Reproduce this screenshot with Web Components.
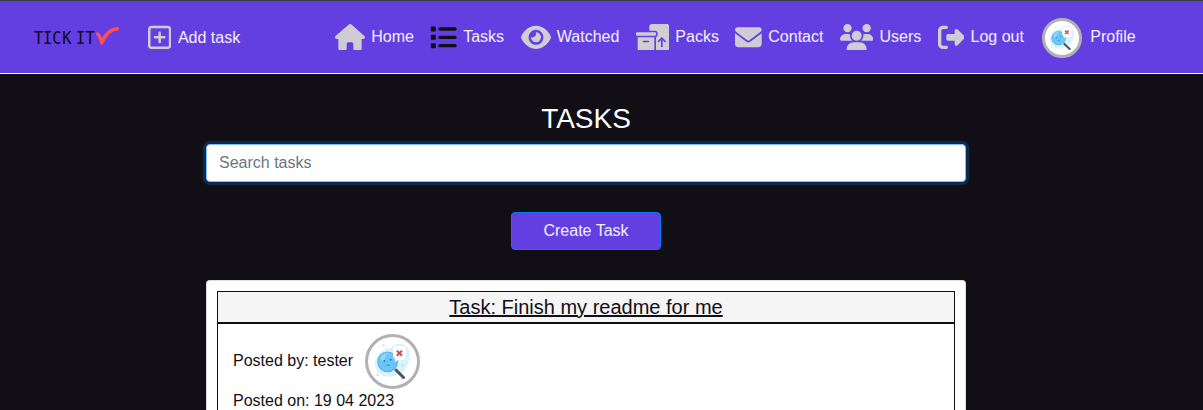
<!DOCTYPE html>
<html lang="en">
<head>
<meta charset="utf-8">
<title>Tick It</title>
<style>
html, body { margin: 0; height: 100%; }
body { background: #110e15; overflow: hidden; font: 16px/24px "Liberation Sans", Arial, sans-serif; color: #110e15; }
</style>
</head>
<body>
<tick-app></tick-app>
<script>
const ICONS = {
  plus: [448, 'M64 80c-8.8 0-16 7.2-16 16V416c0 8.8 7.2 16 16 16H384c8.8 0 16-7.2 16-16V96c0-8.8-7.2-16-16-16H64zM0 96C0 60.7 28.7 32 64 32H384c35.3 0 64 28.7 64 64V416c0 35.3-28.7 64-64 64H64c-35.3 0-64-28.7-64-64V96zM200 344V280H136c-13.3 0-24-10.7-24-24s10.7-24 24-24h64V168c0-13.3 10.7-24 24-24s24 10.7 24 24v64h64c13.3 0 24 10.7 24 24s-10.7 24-24 24H248v64c0 13.3-10.7 24-24 24s-24-10.7-24-24z'],
  house: [576, 'M575.8 255.5c0 18-15 32.1-32 32.1h-32l.7 160.2c0 2.7-.2 5.4-.5 8.1V472c0 22.1-17.9 40-40 40H456c-1.1 0-2.2 0-3.3-.1c-1.4 .1-2.8 .1-4.2 .1H416 392c-22.1 0-40-17.9-40-40V448 384c0-17.7-14.3-32-32-32H256c-17.7 0-32 14.3-32 32v64 24c0 22.1-17.9 40-40 40H160 128.1c-1.5 0-3-.1-4.5-.2c-1.2 .1-2.4 .2-3.6 .2H104c-22.1 0-40-17.9-40-40V360c0-.9 0-1.9 .1-2.8V287.6H32c-18 0-32-14-32-32.1c0-9 3-17 10-24L266.4 8c7-7 15-8 22-8s15 2 21 7L564.8 231.5c8 7 12 15 11 24z'],
  list: [512, 'M40 48C26.7 48 16 58.7 16 72v48c0 13.3 10.7 24 24 24H88c13.3 0 24-10.7 24-24V72c0-13.3-10.7-24-24-24H40zM192 64c-17.7 0-32 14.3-32 32s14.3 32 32 32H480c17.7 0 32-14.3 32-32s-14.3-32-32-32H192zm0 160c-17.7 0-32 14.3-32 32s14.3 32 32 32H480c17.7 0 32-14.3 32-32s-14.3-32-32-32H192zm0 160c-17.7 0-32 14.3-32 32s14.3 32 32 32H480c17.7 0 32-14.3 32-32s-14.3-32-32-32H192zM16 232v48c0 13.3 10.7 24 24 24H88c13.3 0 24-10.7 24-24V232c0-13.3-10.7-24-24-24H40c-13.3 0-24 10.7-24 24zM40 368c-13.3 0-24 10.7-24 24v48c0 13.3 10.7 24 24 24H88c13.3 0 24-10.7 24-24V392c0-13.3-10.7-24-24-24H40z'],
  eye: [576, 'M288 32c-80.8 0-145.5 36.8-192.6 80.6C48.6 156 17.3 208 2.5 243.7c-3.3 7.9-3.3 16.7 0 24.6C17.3 304 48.6 356 95.4 399.4C142.5 443.2 207.2 480 288 480s145.5-36.8 192.6-80.6c46.8-43.5 78.1-95.4 93-131.1c3.3-7.9 3.3-16.7 0-24.6c-14.9-35.7-46.2-87.7-93-131.1C433.5 68.8 368.8 32 288 32zM144 256a144 144 0 1 1 288 0 144 144 0 1 1 -288 0zm144-64c0 35.3-28.7 64-64 64c-7.1 0-13.9-1.2-20.3-3.3c-5.5-1.8-11.9 1.6-11.7 7.4c.3 6.9 1.3 13.8 3.2 20.7c13.7 51.2 66.4 81.6 117.6 67.9s81.6-66.4 67.9-117.6c-11.1-41.5-47.8-69.4-88.6-71.1c-5.8-.2-9.2 6.1-7.4 11.7c2.1 6.4 3.3 13.2 3.3 20.3z'],
  boxes: [640, 'M256 48c0-26.5 21.5-48 48-48H592c26.5 0 48 21.5 48 48V464c0 26.5-21.5 48-48 48H381.3c1.8-5 2.7-10.4 2.7-16V253.3c18.6-6.6 32-24.4 32-45.3V176c0-26.5-21.5-48-48-48H256V48zM571.3 347.3c6.2-6.2 6.2-16.4 0-22.6l-64-64c-6.2-6.2-16.4-6.2-22.6 0l-64 64c-6.2 6.2-6.2 16.4 0 22.6s16.4 6.2 22.6 0L480 310.6V432c0 8.8 7.2 16 16 16s16-7.2 16-16V310.6l36.7 36.7c6.2 6.2 16.4 6.2 22.6 0zM0 176c0-8.8 7.2-16 16-16H368c8.8 0 16 7.2 16 16v32c0 8.8-7.2 16-16 16H16c-8.8 0-16-7.2-16-16V176zm352 80V480c0 17.7-14.3 32-32 32H64c-17.7 0-32-14.3-32-32V256H352zM144 320c-8.8 0-16 7.2-16 16s7.2 16 16 16h96c8.8 0 16-7.2 16-16s-7.2-16-16-16H144z'],
  envelope: [512, 'M48 64C21.5 64 0 85.5 0 112c0 15.1 7.1 29.3 19.2 38.4L236.8 313.6c11.4 8.5 27 8.5 38.4 0L492.8 150.4c12.1-9.1 19.2-23.3 19.2-38.4c0-26.5-21.5-48-48-48H48zM0 176V384c0 35.3 28.7 64 64 64H448c35.3 0 64-28.7 64-64V176L294.4 339.2c-22.8 17.1-54 17.1-76.8 0L0 176z'],
  users: [640, 'M144 0a80 80 0 1 1 0 160A80 80 0 1 1 144 0zM512 0a80 80 0 1 1 0 160A80 80 0 1 1 512 0zM0 298.7C0 239.8 47.8 192 106.7 192h42.7c15.9 0 31 3.5 44.6 9.7c-1.3 7.2-1.9 14.7-1.9 22.3c0 38.2 16.8 72.5 43.3 96c-.2 0-.4 0-.7 0H21.3C9.6 320 0 310.4 0 298.7zM405.3 320c-.2 0-.4 0-.7 0c26.6-23.5 43.3-57.8 43.3-96c0-7.6-.7-15-1.9-22.3c13.6-6.3 28.7-9.7 44.6-9.7h42.7C592.2 192 640 239.8 640 298.7c0 11.8-9.6 21.3-21.3 21.3H405.3zM224 224a96 96 0 1 1 192 0 96 96 0 1 1 -192 0zM128 485.3C128 411.7 187.7 352 261.3 352H378.7C452.3 352 512 411.7 512 485.3c0 14.7-11.9 26.7-26.7 26.7H154.7c-14.7 0-26.7-11.9-26.7-26.7z'],
  exit: [512, 'M377.9 105.9L500.7 228.7c7.2 7.2 11.3 17.1 11.3 27.3s-4.1 20.1-11.3 27.3L377.9 406.1c-6.4 6.4-15 9.9-24 9.9c-18.7 0-33.9-15.2-33.9-33.9l0-62.1-128 0c-17.7 0-32-14.3-32-32l0-64c0-17.7 14.3-32 32-32l128 0 0-62.1c0-18.7 15.2-33.9 33.9-33.9c9 0 17.6 3.6 24 9.9zM160 96L96 96c-17.7 0-32 14.3-32 32l0 256c0 17.7 14.3 32 32 32l64 0c17.7 0 32 14.3 32 32s-14.3 32-32 32l-64 0c-53 0-96-43-96-96L0 128C0 75 43 32 96 32l64 0c17.7 0 32 14.3 32 32s-14.3 32-32 32z']
};

function define(name, markup) {
  customElements.define(name, class extends HTMLElement {
    constructor() {
      super();
      this.attachShadow({ mode: 'open' }).innerHTML = typeof markup === 'function' ? markup(this) : markup;
    }
  });
}

define('tick-avatar', `
<style>
:host { display: block; box-sizing: border-box; width: var(--size, 40px); height: var(--size, 40px); border: 3px solid #b1b1b1; border-radius: 50%; background: #fff; overflow: hidden; flex: none; }
svg { display: block; width: 100%; height: 100%; }
</style>
<svg viewBox="0 0 49 49">
  <path d="M8 32C4 22 13 11 23 11C26 5 39 5 41 14C43 24 38 37 27 39C18 41 11 39 8 32Z" fill="#d8f3fc"/>
  <g fill="#9fdcf7"><circle cx="15.5" cy="8.3" r=".9"/><circle cx="9.5" cy="38" r="1"/><circle cx="34.5" cy="28.5" r=".9"/></g>
  <path d="M28 33L35.5 40.5" stroke="#4b5664" stroke-width="3" stroke-linecap="round"/>
  <circle cx="19.6" cy="24.8" r="9.8" fill="#6bc5f8" stroke="#5fb2e2" stroke-width="1.2"/>
  <path d="M12 22Q14 16 20 16Q16 20 16 25Z" fill="#92d9fb"/>
  <g fill="#3777ad"><circle cx="16.3" cy="24" r="1"/><circle cx="22.7" cy="22.8" r="1"/></g>
  <path d="M18 28.5q2-1.5 4 0" fill="none" stroke="#3d8dc5" stroke-width=".9"/>
  <path d="M25 12q0-3 3-3h7q3 0 3 3v8q0 3-3 3h-5l-3 2v-3q-2-1-2-3Z" fill="#fff"/>
  <path d="M28.8 13.6L34 18.8M34 13.6L28.8 18.8" stroke="#df4146" stroke-width="2"/>
</svg>`);

define('tick-link', el => {
  const icon = ICONS[el.getAttribute('icon')];
  const lead = icon
    ? `<svg viewBox="0 0 ${icon[0]} 512" style="width:${icon[0] / 19.2}px"><path d="${icon[1]}"/></svg>`
    : '<tick-avatar></tick-avatar>';
  return `
<style>
:host { display: block; color: #f3f0fc; }
a { display: flex; align-items: center; gap: var(--gap, 6.2px); color: inherit; white-space: nowrap; }
svg { display: block; height: 26.67px; fill: #cfcdd3; flex: none; }
:host([active]) svg { fill: #110e15; }
span { position: relative; top: var(--lift, 0px); }
</style>
<a>${lead}<span><slot></slot></span></a>`;
});

define('tick-logo', `
<style>
:host { display: block; width: 90px; height: 32px; }
svg { display: block; }
text { font: 18.2px "DejaVu Sans Mono", monospace; fill: #0b0716; text-anchor: middle; }
</style>
<svg width="90" height="32" viewBox="0 0 90 32">
  <g transform="scale(.84 1)"><text x="6.6 17.3 28.3 40.2 48 56.6 67.9" y="23">TICK IT</text></g>
  <path d="M64.7 13Q67.5 15.5 68.7 22Q74 8.5 84.5 7.7" fill="none" stroke="#ff4f4f" stroke-width="3.4" stroke-linecap="round" stroke-linejoin="round"/>
</svg>`);

define('tick-nav', `
<style>
:host { display: flex; align-items: center; box-sizing: border-box; height: 74px; padding: 0 0 0 33px; background: #633fe2; border-top: 1px solid #3b3b42; border-bottom: 1px solid #fff; }
tick-link.add { margin-left: 25px; --lift: 1px; --gap: 6.6px; }
nav { display: flex; align-items: center; gap: 16.5px; margin-left: 94.8px; }
tick-link.profile { margin: 2px 0 0 1.2px; --gap: 8.6px; --lift: -1px; }
</style>
<tick-logo></tick-logo>
<tick-link class="add" icon="plus">Add task</tick-link>
<nav>
  <tick-link icon="house">Home</tick-link>
  <tick-link icon="list" active>Tasks</tick-link>
  <tick-link icon="eye">Watched</tick-link>
  <tick-link icon="boxes">Packs</tick-link>
  <tick-link icon="envelope">Contact</tick-link>
  <tick-link icon="users">Users</tick-link>
  <tick-link icon="exit">Log out</tick-link>
  <tick-link class="profile">Profile</tick-link>
</nav>`);

define('tick-search', `
<style>
:host { display: block; }
input { display: block; box-sizing: border-box; width: 100%; height: 38px; padding: 6px 12px; border: 1px solid #80bdff; border-radius: 4px; outline: 0; background: #fff; font: inherit; box-shadow: 0 0 0 3.2px rgba(0, 123, 255, .25); }
input::placeholder { color: #6c757d; opacity: 1; }
</style>
<input type="text" placeholder="Search tasks">`);

define('tick-button', `
<style>
:host { display: block; }
button { display: block; box-sizing: border-box; width: 150px; height: 38px; padding: 0; border: 1px solid #007bff; border-radius: 4px; background: #633fe2; color: #f3f0fc; font: inherit; }
</style>
<button><slot></slot></button>`);

define('tick-card', `
<style>
:host { display: flex; flex-direction: column; box-sizing: border-box; padding: 10px 10px 0; border: 1px solid #dddce0; border-bottom: 0; border-radius: 4px 4px 0 0; background: #fff; }
h2 { margin: 0; box-sizing: border-box; height: 32px; border: 1px solid #110e15; background: #f5f5f5; font-size: 20px; font-weight: 400; line-height: 30px; text-align: center; text-decoration: underline; }
section { flex: 1; box-sizing: border-box; padding: 10px 15px 0; border: 1px solid #110e15; border-bottom: 0; }
</style>
<h2><slot name="title"></slot></h2>
<section><slot></slot></section>`);

define('tick-author', `
<style>
:host { display: flex; align-items: center; gap: 12px; height: 54px; --size: 55px; }
</style>
<span><slot></slot></span><tick-avatar></tick-avatar>`);

define('tick-app', `
<style>
:host { display: flex; flex-direction: column; height: 100vh; overflow: hidden; }
tick-nav { flex: none; }
main { flex: 1; display: flex; flex-direction: column; width: 760px; margin-left: 206px; }
h1 { margin: 28px 0 8px; font-size: 28px; line-height: 34px; font-weight: 400; color: #fff; text-align: center; }
tick-button { align-self: center; margin: 30px 0; }
tick-card { flex: 1; }
tick-author { margin-bottom: 1px; }
.date { height: 20px; }
</style>
<tick-nav></tick-nav>
<main>
  <h1>TASKS</h1>
  <tick-search></tick-search>
  <tick-button>Create Task</tick-button>
  <tick-card>
    <span slot="title">Task: Finish my readme for me</span>
    <tick-author>Posted by: tester</tick-author>
    <div class="date">Posted on: 19 04 2023</div>
  </tick-card>
</main>`);
</script>
</body>
</html>
